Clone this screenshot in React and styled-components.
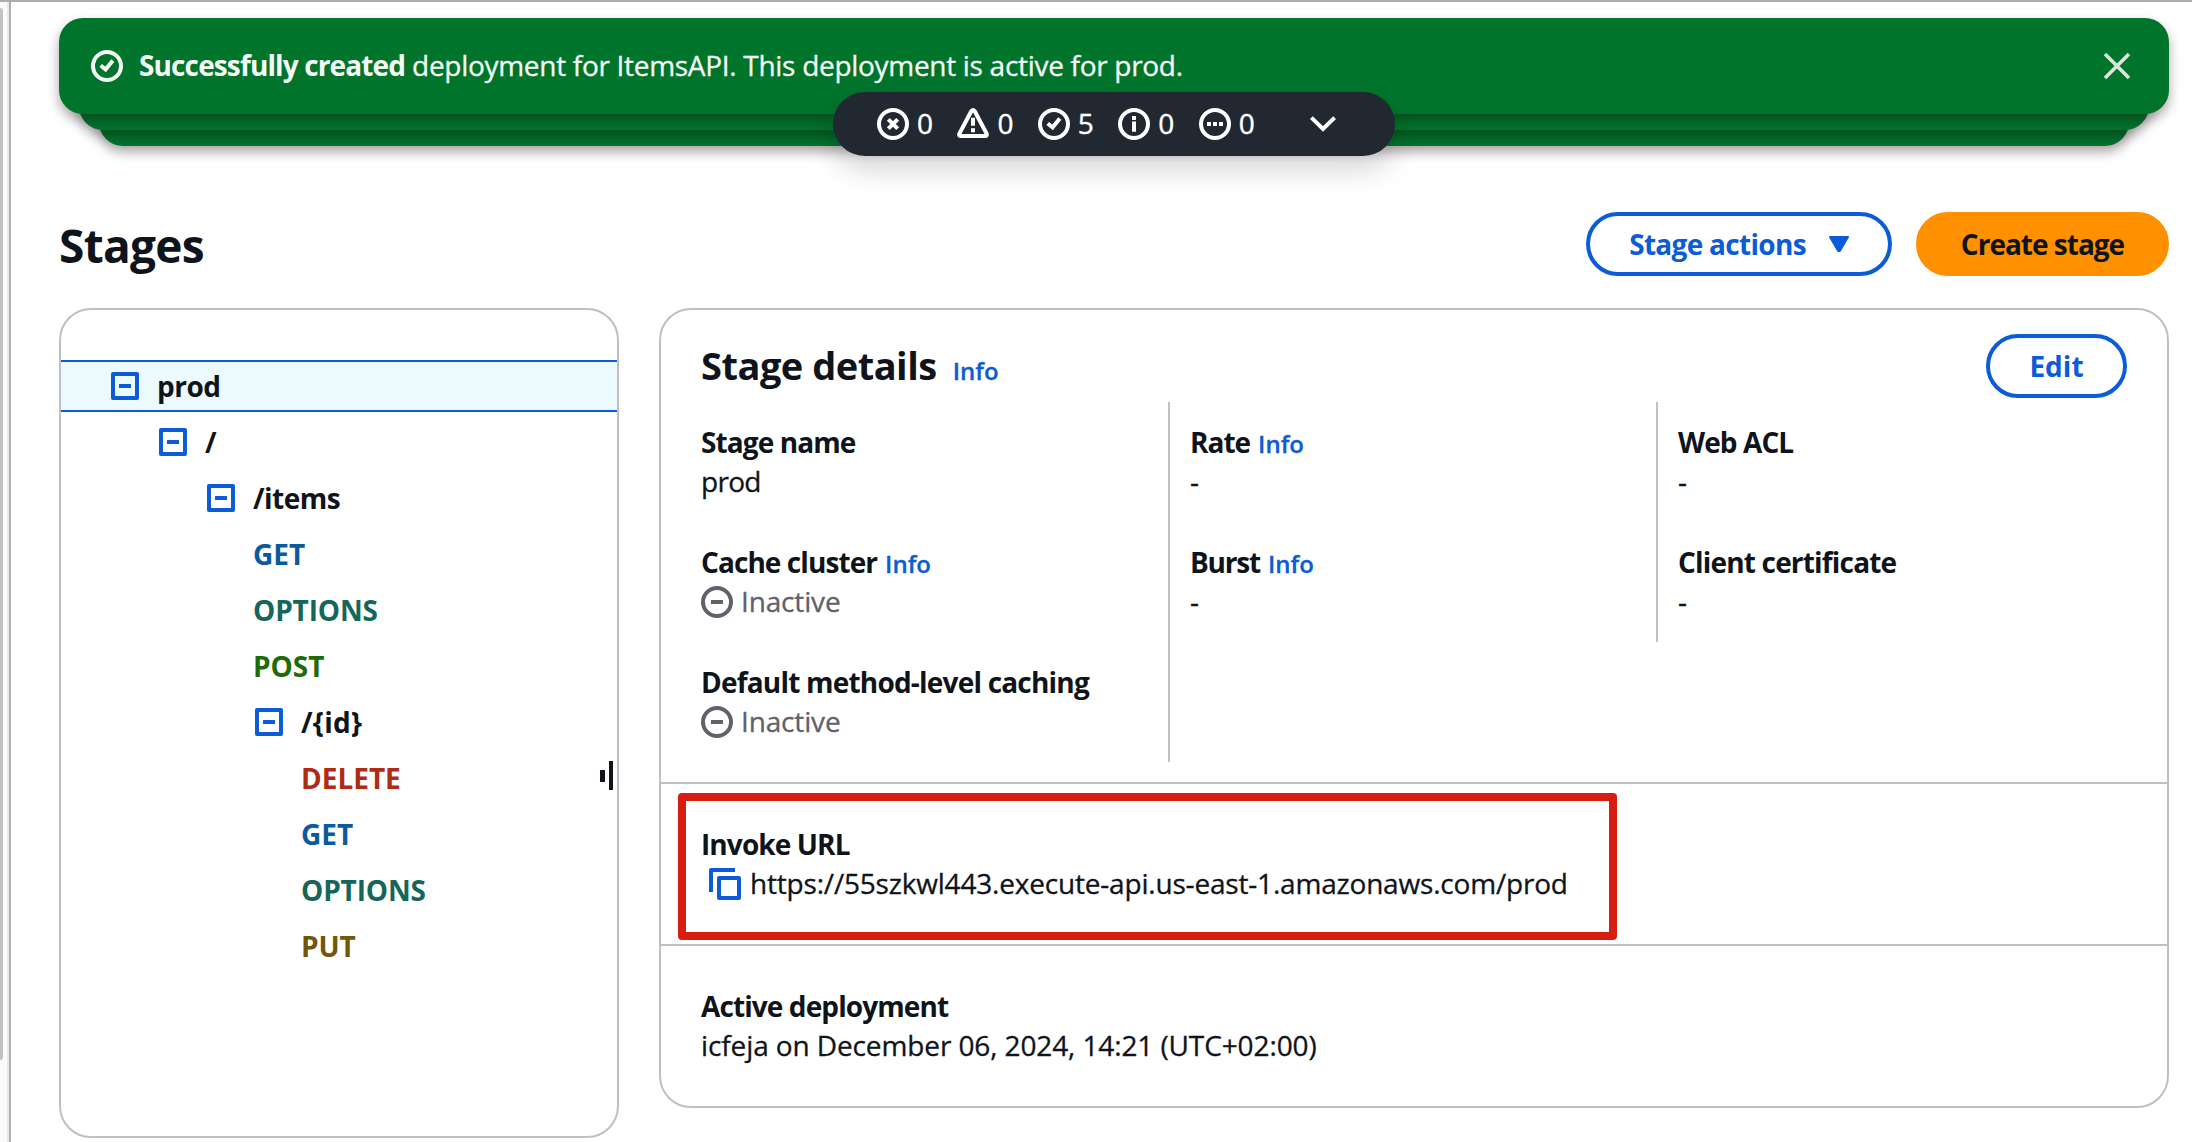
import React from 'react';
import styled, { createGlobalStyle } from 'styled-components';

const blue = '#0b5cd6';
const ink = '#0f141a';
const line = '#bfbfc5';

const GlobalStyle = createGlobalStyle`
  *, *::before, *::after { box-sizing: border-box; }
  body {
    margin: 0;
    background: #fff;
    color: ${ink};
    font-family: "Open Sans", "Noto Sans", sans-serif;
    font-size: 28px;
    line-height: 40px;
    overflow: hidden;
  }
  svg { display: block; flex: none; }
`;

const Screen = styled.div`
  display: flex;
  width: 2192px;
  height: 1142px;
  border-top: 2px solid #acacb3;
  overflow: hidden;
`;

const Rail = styled.aside`
  width: 11px;
  flex: none;
  padding-top: 6px;
  background: linear-gradient(to right, #fafafa 7px, #e9e9ea 7px);
  border-right: 2px solid #adadb5;
`;

const ScrollThumb = styled.div`
  width: 3px;
  height: 1052px;
  border-radius: 0 3px 3px 0;
  background: #c1c1c1;
`;

const Main = styled.main`
  flex: 1;
  padding: 16px 23px 0 48px;
`;

const T = styled.span`
  white-space: pre;
  letter-spacing: ${(p) => p.$ls || 0}px;
`;

const FlashStack = styled.div`
  position: relative;
  height: 128px;
`;

const FlashLayer = styled.div`
  position: absolute;
  top: ${(p) => p.$depth * 16}px;
  left: ${(p) => p.$depth * 20}px;
  right: ${(p) => p.$depth * 20}px;
  height: 96px;
  border-radius: 24px;
  background: #00742b;
  box-shadow: 0 6px 12px rgba(20, 7, 12, 0.36);
`;

const Flash = styled(FlashLayer)`
  display: flex;
  align-items: center;
  padding: 0 38px 0 32px;
  color: #f4fbf5;
`;

const FlashText = styled.div`
  flex: 1;
  padding-left: 16px;
  margin-top: -2px;
`;

const FlashBody = styled(T)`
  -webkit-text-stroke: 0.3px currentColor;
`;

const Pill = styled.div`
  position: absolute;
  top: 74px;
  left: 774px;
  width: 562px;
  height: 64px;
  border-radius: 32px;
  background: #222832;
  color: #fff;
  display: flex;
  align-items: center;
  gap: 24.4px;
  padding-left: 44px;
  box-shadow: 0 14px 28px rgba(0, 7, 22, 0.16);
`;

const Count = styled.div`
  display: flex;
  align-items: center;
  gap: 8px;
  -webkit-text-stroke: 0.4px currentColor;

  span { padding-bottom: 2px; }
`;

const PageHeader = styled.header`
  display: flex;
  align-items: center;
  gap: 24px;
  height: 64px;
  margin-top: 66px;
`;

const H1 = styled.h1`
  flex: 1;
  margin: 0;
  padding-top: 2px;
  font-size: 46px;
  line-height: 60px;
  font-weight: 700;
`;

const Button = styled.button`
  width: ${(p) => p.$w}px;
  height: 64px;
  flex: none;
  padding: 0;
  border: 4px solid ${(p) => (p.$primary ? '#ff9100' : blue)};
  border-radius: 32px;
  background: ${(p) => (p.$primary ? '#ff9100' : '#fff')};
  color: ${(p) => (p.$primary ? ink : blue)};
  font: 700 28px/40px "Open Sans", sans-serif;
  display: flex;
  align-items: center;
  justify-content: center;
  gap: 23px;
`;

const Columns = styled.div`
  display: flex;
  align-items: flex-start;
  gap: 40px;
  margin-top: 32px;
`;

const Panel = styled.section`
  border: 2px solid ${line};
  border-radius: 32px;
  background: #fff;
`;

const TreePanel = styled(Panel)`
  display: flex;
  width: 560px;
  height: 830px;
  position: relative;
`;

const Tree = styled.ul`
  flex: 1;
  list-style: none;
  margin: 0;
  padding: 50px 0 0;
  display: flex;
  flex-direction: column;
  gap: 4px;
`;

const TreeRow = styled.li`
  display: flex;
  align-items: center;
  gap: 18px;
  height: 52px;
  padding-left: ${(p) => (p.$leaf ? 48 : 50) + p.$level * 48}px;
  font-weight: 700;
  color: ${(p) => p.$color || ink};
  border: solid ${(p) => (p.$selected ? blue : 'transparent')};
  border-width: 2px 0;
  background: ${(p) => (p.$selected ? '#ecfafd' : 'transparent')};
`;

const Handle = styled.div`
  position: absolute;
  right: 4px;
  top: 451px;
  display: flex;
  align-items: center;
  gap: 4px;
`;

const Bar = styled.i`
  width: 4.5px;
  height: ${(p) => p.$h}px;
  background: ${ink};
`;

const DetailPanel = styled(Panel)`
  flex: 1;
  height: 800px;
`;

const DetailHeader = styled.div`
  display: flex;
  align-items: center;
  justify-content: space-between;
  padding: 24px 40px 0;
`;

const H2 = styled.h2`
  margin: 0;
  padding-top: 4px;
  font-size: 38px;
  line-height: 48px;
  font-weight: 700;
`;

const Info = styled.a`
  margin-left: ${(p) => p.$gap || 8}px;
  color: ${blue};
  font-size: 24px;
  font-weight: 600;
  -webkit-text-stroke: 0.3px currentColor;
`;

const Grid = styled.div`
  display: grid;
  grid-template-columns: 489px 488px 1fr;
  align-items: start;
  margin: 4px 20px 20px 18px;
`;

const Col = styled.div`
  border-left: 2px solid ${(p) => (p.$first ? 'transparent' : line)};
`;

const Field = styled.div`
  padding: 19px 0 21px 20px;
`;

const Label = styled.div`
  height: 40px;
  padding-top: 1px;
  font-weight: 700;
`;

const Value = styled.div`
  display: flex;
  align-items: center;
  height: 40px;
  gap: ${(p) => p.$gap || 8}px;
  padding-left: ${(p) => p.$indent || 0}px;
  color: ${(p) => (p.$muted ? '#5f626b' : ink)};
  -webkit-text-stroke: 0.3px currentColor;

  svg { margin-top: 2px; }
`;

const Section = styled.div`
  height: 162px;
  border-top: 2px solid ${line};
  padding: 39px 40px 0;
  position: relative;
`;

const Highlight = styled.div`
  position: absolute;
  left: 17px;
  top: 9px;
  width: 939px;
  height: 147px;
  border: 8px solid #d71d10;
  border-radius: 4px;
`;

const StatusIcon = ({ children }) => (
  <svg width="32" height="32" viewBox="0 0 32 32" fill="none" stroke="currentColor" strokeWidth="4">
    {children}
  </svg>
);
const Ring = () => <circle cx="16" cy="16" r="14" />;

const CheckIcon = () => (
  <StatusIcon><Ring /><path d="M9.7 15.5L14.6 19.4L21.8 10.5" /></StatusIcon>
);
const ErrorIcon = () => (
  <StatusIcon><Ring /><path d="M11.3 11.3l9.4 9.4M20.7 11.3l-9.4 9.4" /></StatusIcon>
);
const WarnIcon = () => (
  <StatusIcon>
    <path d="M14.3 3.2Q16 1 17.7 3.2L29.6 25.5Q30.5 28 28 28H4Q1.5 28 2.4 25.5Z" />
    <path d="M16 9.8v8M16 20.2v4" />
  </StatusIcon>
);
const InfoIcon = () => (
  <StatusIcon><Ring /><path d="M16 8v4M16 13.5v10.3" /></StatusIcon>
);
const DotsIcon = () => (
  <StatusIcon><Ring /><path d="M8 16h4M14 16h4M20 16h4" /></StatusIcon>
);
const MinusCircle = () => (
  <StatusIcon><Ring /><path d="M10 16h12" /></StatusIcon>
);
const MinusSquare = () => (
  <svg width="28" height="28" viewBox="0 0 28 28" fill="none" stroke={blue} strokeWidth="4">
    <rect x="2" y="2" width="24" height="24" strokeLinejoin="round" />
    <path d="M8 14h12" />
  </svg>
);
const CopyIcon = () => (
  <svg width="32" height="32" viewBox="0 0 32 32" fill="none" stroke={blue} strokeWidth="4" strokeLinejoin="round">
    <path d="M26 2H2v22" />
    <rect x="10" y="10" width="20" height="20" />
  </svg>
);
const CloseIcon = () => (
  <svg width="28" height="28" viewBox="0 0 28 28" fill="none" stroke="#dbe7de" strokeWidth="3.6">
    <path d="M2 2l24 24M26 2L2 26" />
  </svg>
);
const Chevron = () => (
  <svg width="26" height="16" viewBox="0 0 26 16" fill="none" stroke="#fff" strokeWidth="4">
    <path d="M1.4 1.6L13 13L24.6 1.6" />
  </svg>
);
const Caret = () => (
  <svg width="20" height="16" viewBox="0 0 20 16" fill={blue} stroke={blue} strokeWidth="2" strokeLinejoin="round">
    <path d="M1 1h18l-8.2 14h-1.6z" />
  </svg>
);

const ChevronSlot = styled.div`
  margin-left: 31px;
`;

const counts = [
  [ErrorIcon, '0'],
  [WarnIcon, '0'],
  [CheckIcon, '5'],
  [InfoIcon, '0'],
  [DotsIcon, '0'],
];

const rows = [
  { level: 0, text: 'prod', open: true, selected: true, ls: -0.5 },
  { level: 1, text: '/', open: true },
  { level: 2, text: '/items', open: true, ls: -0.5 },
  { level: 3, text: 'GET', color: '#0b5a9c' },
  { level: 3, text: 'OPTIONS', color: '#14665a', ls: -0.15 },
  { level: 3, text: 'POST', color: '#1f6b06' },
  { level: 3, text: '/{id}', open: true, ls: 0.3 },
  { level: 4, text: 'DELETE', color: '#b02a14' },
  { level: 4, text: 'GET', color: '#0b5a9c' },
  { level: 4, text: 'OPTIONS', color: '#14665a', ls: -0.15 },
  { level: 4, text: 'PUT', color: '#745608', ls: -0.1 },
];

const Inactive = () => (
  <Value $muted><MinusCircle /><T $ls={-0.15}>Inactive</T></Value>
);

export default function App() {
  return (
    <>
      <GlobalStyle />
      <Screen>
        <Rail><ScrollThumb /></Rail>
        <Main>
          <FlashStack>
            <FlashLayer $depth={2} />
            <FlashLayer $depth={1} />
            <Flash $depth={0}>
              <CheckIcon />
              <FlashText>
                <T as="b" $ls={-0.87}>Successfully created</T>
                <FlashBody $ls={-0.3}> deployment for ItemsAPI. This deployment is active for prod.</FlashBody>
              </FlashText>
              <CloseIcon />
            </Flash>
            <Pill>
              {counts.map(([Icon, n], i) => (
                <Count key={i}><Icon /><T>{n}</T></Count>
              ))}
              <ChevronSlot><Chevron /></ChevronSlot>
            </Pill>
          </FlashStack>

          <PageHeader>
            <H1><T $ls={-0.7}>Stages</T></H1>
            <Button $w={306}><T $ls={-0.7}>Stage actions</T><Caret /></Button>
            <Button $w={253} $primary><T $ls={-1}>Create stage</T></Button>
          </PageHeader>

          <Columns>
            <TreePanel>
              <Tree>
                {rows.map((r, i) => (
                  <TreeRow key={i} $level={r.level} $leaf={!r.open} $color={r.color} $selected={r.selected}>
                    {r.open && <MinusSquare />}
                    <T $ls={r.ls}>{r.text}</T>
                  </TreeRow>
                ))}
              </Tree>
              <Handle><Bar $h={12} /><Bar $h={29} /></Handle>
            </TreePanel>

            <DetailPanel>
              <DetailHeader>
                <H2><T $ls={-0.5}>Stage details</T><Info $gap={16}>Info</Info></H2>
                <Button $w={141}><T>Edit</T></Button>
              </DetailHeader>
              <Grid>
                <Col $first>
                  <Field><Label><T $ls={-0.9}>Stage name</T></Label><Value><T $ls={-0.7}>prod</T></Value></Field>
                  <Field><Label><T $ls={-0.92}>Cache cluster</T><Info>Info</Info></Label><Inactive /></Field>
                  <Field><Label><T $ls={-0.8}>Default method-level caching</T></Label><Inactive /></Field>
                </Col>
                <Col>
                  <Field><Label><T $ls={-1}>Rate</T><Info>Info</Info></Label><Value>-</Value></Field>
                  <Field><Label><T $ls={-1.2}>Burst</T><Info>Info</Info></Label><Value>-</Value></Field>
                  <Field><Label /><Value /></Field>
                </Col>
                <Col>
                  <Field><Label><T $ls={-0.9}>Web ACL</T></Label><Value>-</Value></Field>
                  <Field><Label><T $ls={-0.82}>Client certificate</T></Label><Value>-</Value></Field>
                </Col>
              </Grid>
              <Section>
                <Label><T $ls={-0.9}>Invoke URL</T></Label>
                <Value $indent={8} $gap={9}>
                  <CopyIcon />
                  <T $ls={-0.19}>https://55szkwl443.execute-api.us-east-1.amazonaws.com/prod</T>
                </Value>
                <Highlight />
              </Section>
              <Section>
                <Label><T $ls={-0.9}>Active deployment</T></Label>
                <Value><T $ls={-0.11}>icfeja on December 06, 2024, 14:21 (UTC+02:00)</T></Value>
              </Section>
            </DetailPanel>
          </Columns>
        </Main>
      </Screen>
    </>
  );
}
